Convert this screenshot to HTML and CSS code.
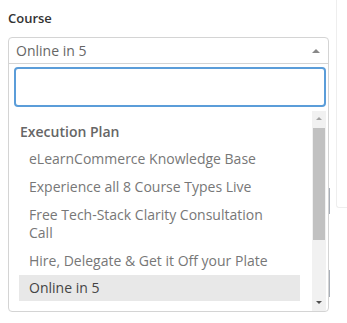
FILE: index.html
```html
<!DOCTYPE html>
<html lang="en">
<head>
    <meta charset="UTF-8">
    <title>Course</title>
    <link rel="stylesheet" href="styles.css">
</head>
<body>
    <div class="side-card"></div>
    <span class="peek peek-a"></span>
    <span class="peek peek-b"></span>
    <div class="field">
        <label class="field-label">Course</label>
        <div class="select">
            <div class="select-current">
                <span>Online in 5</span>
                <span class="arrow-up"></span>
            </div>
            <div class="dropdown">
                <div class="search-wrap">
                    <input type="text" class="search">
                </div>
                <div class="results">
                    <ul class="options">
                        <li class="group">Execution Plan</li>
                        <li class="option">eLearnCommerce Knowledge Base</li>
                        <li class="option">Experience all 8 Course Types Live</li>
                        <li class="option">Free Tech-Stack Clarity Consultation Call</li>
                        <li class="option">Hire, Delegate &amp; Get it Off your Plate</li>
                        <li class="option selected">Online in 5</li>
                    </ul>
                    <div class="scrollbar">
                        <span class="sb-up"></span>
                        <span class="sb-thumb"></span>
                        <span class="sb-down"></span>
                    </div>
                </div>
            </div>
        </div>
    </div>
</body>
</html>
```

FILE: styles.css
```css
body {
    margin: 0;
    padding: 8px;
    font-family: "Open Sans", "Noto Sans", sans-serif;
    font-size: 13px;
    color: #444;
    background: #fff;
    position: relative;
}

.side-card {
    position: absolute;
    left: 336px;
    top: 0;
    width: 20px;
    height: 207px;
    border-left: 1px solid #eeeeee;
    border-bottom: 1px solid #eeeeee;
    border-radius: 0 0 0 3px;
}

.peek {
    position: absolute;
    left: 329px;
    width: 1px;
    background: #a9afb8;
}

.peek-a {
    top: 188px;
    height: 26px;
}

.peek-b {
    top: 270px;
    height: 27px;
}

.field {
    width: 321px;
    position: relative;
}

.field-label {
    display: block;
    font-weight: 600;
    color: #333;
    height: 29px;
    line-height: 20px;
}

.select {
    border: 1px solid #d4d4d4;
    border-radius: 4px;
    background: #fff;
}

.select-current {
    height: 25px;
    display: flex;
    align-items: center;
    justify-content: space-between;
    padding: 0 8px 0 7px;
    border-bottom: 1px solid #d4d4d4;
    font-size: 14px;
    color: #666;
}

.arrow-up {
    width: 0;
    height: 0;
    border-left: 4px solid transparent;
    border-right: 4px solid transparent;
    border-bottom: 4px solid #888;
}

.search-wrap {
    padding: 3px 2px 4px 5px;
}

.search {
    display: block;
    box-sizing: border-box;
    width: 312px;
    height: 40px;
    margin: 0;
    border: 2px solid #5b9dd9;
    border-radius: 4px;
    outline: none;
}

.results {
    display: flex;
    height: 200px;
    overflow: hidden;
}

.options {
    list-style: none;
    margin: 0;
    padding: 6px 12px 0 10px;
    flex: 1;
    font-size: 14px;
}

.options li {
    line-height: 18px;
    padding: 5px 10px 5px 10px;
    color: #777;
}

.options .group {
    font-weight: 600;
    color: #666;
    padding: 6px 0 4px 1px;
}

.options .selected {
    background: #e8e8e8;
    color: #444;
    padding-top: 4px;
    padding-bottom: 4px;
}

.scrollbar {
    width: 14px;
    margin-right: 2px;
    background: #f1f1f1;
    position: relative;
}

.sb-up,
.sb-down {
    position: absolute;
    left: 4px;
    width: 0;
    height: 0;
    border-left: 3px solid transparent;
    border-right: 3px solid transparent;
}

.sb-up {
    top: 6px;
    border-bottom: 3px solid #a3a3a3;
}

.sb-down {
    bottom: 7px;
    border-top: 3px solid #505050;
}

.sb-thumb {
    position: absolute;
    left: 1px;
    right: 1px;
    top: 17px;
    height: 112px;
    background: #c1c1c1;
}
```
